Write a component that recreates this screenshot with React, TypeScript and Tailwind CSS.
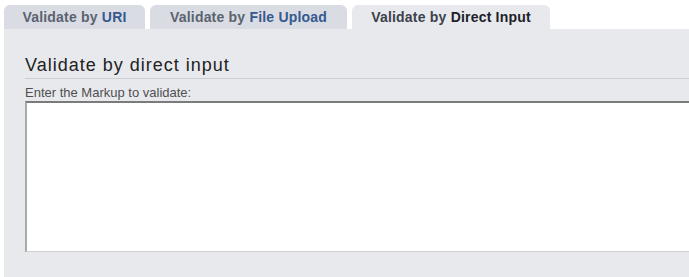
import { useState } from "react";

type Tab = {
  id: string;
  lead: string;
  label: string;
  width: string;
};

const tabs: Tab[] = [
  { id: "uri", lead: "Validate by ", label: "URI", width: "w-[141px]" },
  { id: "upload", lead: "Validate by ", label: "File Upload", width: "w-[197px]" },
  { id: "input", lead: "Validate by ", label: "Direct Input", width: "w-[198px]" },
];

const App = () => {
  const [active, setActive] = useState("input");
  const [markup, setMarkup] = useState("");

  return (
    <div className="min-h-[277px] w-[689px] overflow-hidden bg-white pl-[4px] pt-[5px] font-['Liberation_Sans',Arial,sans-serif]">
      <div className="flex flex-row gap-[5px]">
        {tabs.map((tab) => {
          const isActive = tab.id === active;
          return (
            <button
              key={tab.id}
              onClick={() => setActive(tab.id)}
              className={
                (isActive
                  ? "bg-[#e8e9ed] text-[#3c414c] "
                  : "bg-[#d9dce3] text-[#5b6370] ") +
                tab.width +
                " h-[24px] rounded-t-[6px] text-center text-[14px] font-bold leading-[24px] tracking-[0.2px]"
              }
            >
              {tab.lead}
              <span className={isActive ? "text-[#1c1f2a]" : "text-[#35598f]"}>
                {tab.label}
              </span>
            </button>
          );
        })}
      </div>

      <div className="-mr-[40px] h-[248px] bg-[#e8e9ed] pl-[21px] pt-[26px]">
        <h2 className="border-b border-[#cdced3] pb-[2px] text-[18px] leading-[21px] tracking-[1px] text-[#222222]">
          Validate by direct input
        </h2>
        <label className="mt-[6px] block text-[13px] leading-[16px] text-[#505050]">
          Enter the Markup to validate:
        </label>
        <textarea
          value={markup}
          onChange={(e) => setMarkup(e.target.value)}
          className="block h-[151px] w-full resize-none border-b border-l-2 border-r border-t-2 border-b-[#d0d0d0] border-l-[#a9a9a9] border-r-[#d0d0d0] border-t-[#7b7b7b] bg-white outline-none"
        />
      </div>
    </div>
  );
};

export default App;
